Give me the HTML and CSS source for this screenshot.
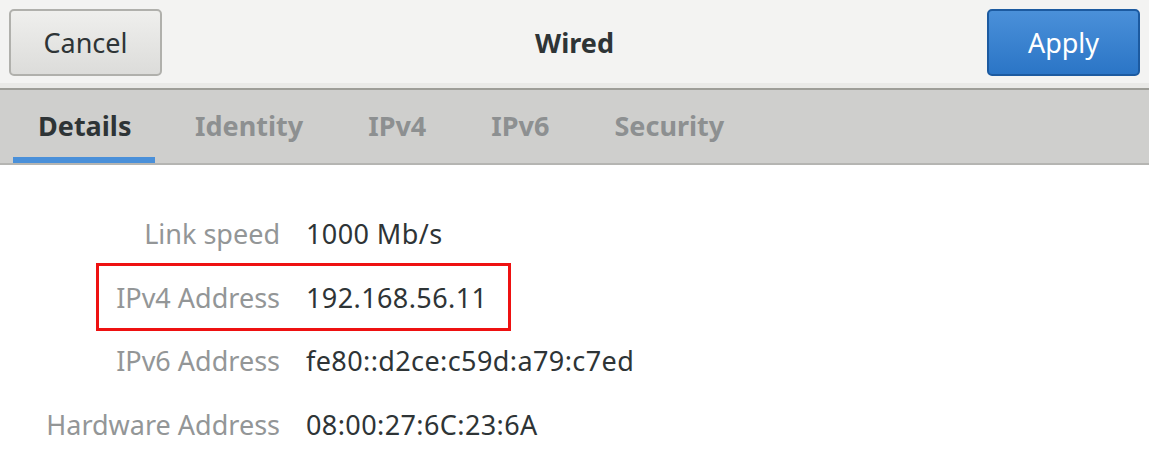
FILE: index.html
```html
<!DOCTYPE html>
<html>
<head>
<meta charset="utf-8">
<link rel="stylesheet" href="styles.css">
</head>
<body>
<div class="window">
  <header class="headerbar">
    <button class="btn btn-cancel">Cancel</button>
    <div class="title">Wired</div>
    <button class="btn btn-apply">Apply</button>
  </header>
  <nav class="tabs">
    <div class="tab active">Details</div>
    <div class="tab">Identity</div>
    <div class="tab">IPv4</div>
    <div class="tab">IPv6</div>
    <div class="tab">Security</div>
  </nav>
  <main class="details">
    <div class="highlight"></div>
    <div class="label">Link speed</div><div class="value">1000 Mb/s</div>
    <div class="label">IPv4 Address</div><div class="value">192.168.56.11</div>
    <div class="label">IPv6 Address</div><div class="value">fe80::d2ce:c59d:a79:c7ed</div>
    <div class="label">Hardware Address</div><div class="value">08:00:27:6C:23:6A</div>
  </main>
</div>
</body>
</html>
```
FILE: styles.css
```css
* { box-sizing: border-box; }
html, body {
  margin: 0;
  padding: 0;
  background: #ffffff;
}
body {
  font-family: "Noto Sans", "DejaVu Sans", sans-serif;
  color: #2e3436;
  width: 1149px;
  height: 466px;
  overflow: hidden;
}
.window {
  display: flex;
  flex-direction: column;
}
.headerbar {
  height: 90px;
  background: #f3f3f2;
  border-bottom: 2px solid #9d9d98;
  box-shadow: inset 0 -5px 0 #e9e9e7;
  display: flex;
  align-items: flex-start;
  justify-content: space-between;
  padding: 9px 9px 0 9px;
}
.btn {
  font-family: inherit;
  font-size: 27px;
  width: 153px;
  height: 67px;
  border-radius: 5px;
  padding: 0;
  margin: 0;
  line-height: 1;
}
.btn-cancel {
  color: #2e3436;
  border: 2px solid #b0b0ac;
  background: linear-gradient(#efefed, #dcdcda);
}
.btn-apply {
  color: #ffffff;
  border: 2px solid #1c5aa0;
  background: linear-gradient(#4a90d9, #2b75c6);
}
.title {
  font-weight: bold;
  font-size: 27px;
  line-height: 67px;
  color: #2e3436;
}
.tabs {
  height: 75px;
  background: #cfcfcd;
  border-bottom: 2px solid #b5b5b2;
  display: flex;
  gap: 15px;
  padding-left: 13px;
}
.tab {
  font-weight: bold;
  font-size: 27px;
  color: #8d9091;
  padding: 0 25px;
  line-height: 71px;
  height: 73px;
}
.tab.active {
  color: #2e3436;
  border-bottom: 6px solid #4a90d9;
  width: 142px;
}
.details {
  position: relative;
  display: grid;
  grid-template-columns: 280px auto;
  column-gap: 26px;
  grid-auto-rows: 63.5px;
  padding-top: 37px;
  font-size: 27px;
}
.label {
  text-align: right;
  color: #939697;
  line-height: 63.5px;
}
.value {
  color: #2e3436;
  line-height: 63.5px;
  letter-spacing: 0.4px;
}
.highlight {
  position: absolute;
  left: 96px;
  top: 98px;
  width: 415px;
  height: 68px;
  border: 3px solid #ee1111;
}
```
